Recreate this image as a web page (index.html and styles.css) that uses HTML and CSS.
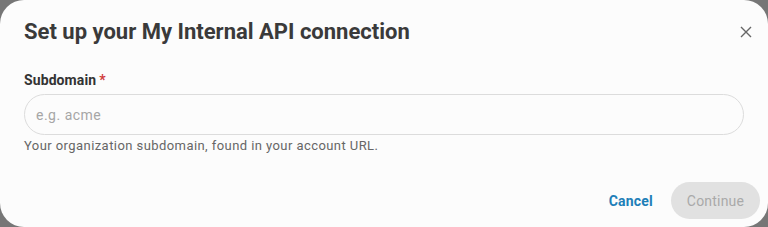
FILE: index.html
```html
<!DOCTYPE html>
<html>
<head>
<meta charset="utf-8">
<link rel="stylesheet" href="styles.css">
</head>
<body>
<div class="dialog">
  <div class="header">
    <h1 class="title">Set up your My Internal API connection</h1>
    <button class="close" aria-label="Close">
      <svg width="12" height="12" viewBox="0 0 12 12"><path d="M1 1L11 11M11 1L1 11" stroke="#666" stroke-width="1.4" fill="none"/></svg>
    </button>
  </div>
  <div class="field">
    <label class="label">Subdomain<span class="req">*</span></label>
    <input class="input" type="text" placeholder="e.g. acme">
    <div class="help">Your organization subdomain, found in your account URL.</div>
  </div>
  <div class="actions">
    <button class="btn-text">Cancel</button>
    <button class="btn-primary" disabled>Continue</button>
  </div>
</div>
</body>
</html>
```
FILE: styles.css
```css
* { box-sizing: border-box; }
html, body { margin: 0; padding: 0; }
body {
  width: 768px;
  height: 227px;
  background: #767676;
  font-family: Roboto, "Noto Sans", sans-serif;
  overflow: hidden;
}
.dialog {
  width: 768px;
  height: 227px;
  background: #fcfcfc;
  border-radius: 24px;
  padding: 17px 10px 0 24px;
  display: flex;
  flex-direction: column;
}
.header {
  display: flex;
  align-items: center;
  justify-content: space-between;
  height: 28px;
}
.title {
  margin: 0;
  font-size: 22px;
  font-weight: 700;
  color: #3a3a3a;
  letter-spacing: 0;
}
.close {
  border: 0;
  background: none;
  padding: 0;
  width: 24px;
  height: 24px;
  display: flex;
  align-items: center;
  justify-content: center;
  margin-top: 2px;
}
.field {
  margin-top: 26px;
  display: flex;
  flex-direction: column;
  padding-right: 14px;
}
.label {
  font-size: 14px;
  font-weight: 700;
  color: #333;
  line-height: 18px;
  letter-spacing: 0.1px;
}
.req { color: #d03a3a; margin-left: 3px; }
.input {
  margin-top: 5px;
  height: 41px;
  border: 1px solid #dcdcdc;
  border-radius: 21px;
  background: #fcfcfc;
  padding: 0 11px;
  font-family: Roboto, sans-serif;
  font-size: 14px;
  color: #333;
  outline: none;
}
.input::placeholder { color: #a6a6a6; letter-spacing: 0.5px; }
.help {
  margin-top: 3px;
  font-size: 13px;
  color: #666;
  letter-spacing: 0.43px;
  line-height: 16px;
}
.actions {
  margin-top: auto;
  margin-bottom: 8px;
  display: flex;
  justify-content: flex-end;
  align-items: center;
  gap: 18px;
  margin-right: -2px;
}
.btn-text {
  border: 0;
  background: none;
  color: #1e7fb8;
  font-family: Roboto, sans-serif;
  font-weight: 700;
  font-size: 14px;
  letter-spacing: 0.2px;
  padding: 0;
}
.btn-primary {
  border: 0;
  background: #e1e1e1;
  color: #a9a9a9;
  font-family: Roboto, sans-serif;
  font-size: 14px;
  width: 89px;
  height: 37px;
  border-radius: 19px;
  letter-spacing: 0.2px;
}
```
